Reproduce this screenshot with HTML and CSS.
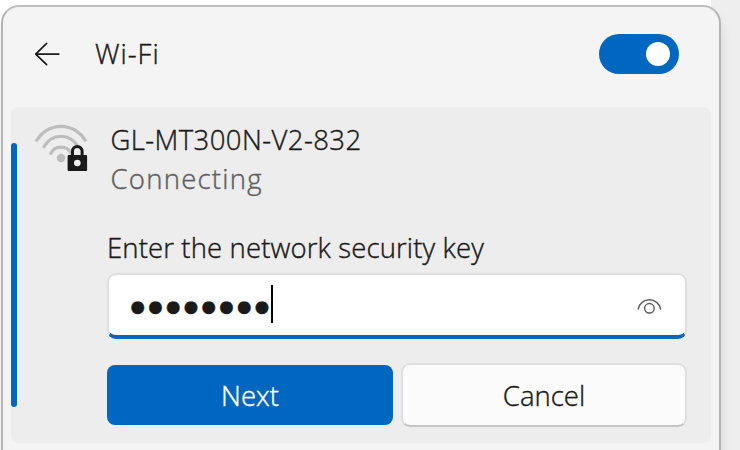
FILE: index.html
```html
<!DOCTYPE html>
<html lang="en">
<head>
<meta charset="utf-8">
<title>Wi-Fi</title>
<link rel="stylesheet" href="styles.css">
</head>
<body>
<main class="flyout">
  <header class="header">
    <svg class="back" width="26" height="24" viewBox="0 0 26 24" aria-hidden="true"><path d="M12.6 1.3 1.7 12.1l10.9 10.6M1.7 12.1H24.8"/></svg>
    <h1 class="title">Wi-Fi</h1>
    <span class="toggle"><span class="knob"></span></span>
  </header>
  <section class="card">
    <span class="accent"></span>
    <div class="network">
      <svg class="wifi" width="54" height="48" viewBox="0 0 54 48" aria-hidden="true">
        <g class="waves"><path d="M2.8 16.2a28 28 0 0 1 48.4 0M10 22.8a19 19 0 0 1 34 0M16.8 29.4a11.5 11.5 0 0 1 20.4 0"/></g>
        <circle class="dot" cx="27" cy="34" r="4.2"/>
        <path class="shackle" d="M38.5 32v-4.7a4.8 4.8 0 0 1 9.6 0V32"/>
        <rect class="lock" x="33.6" y="31" width="19.5" height="16" rx="1"/>
        <circle class="keyhole" cx="43.3" cy="39" r="3.3"/>
      </svg>
      <div class="details">
        <div class="name">GL-MT300N-V2-832</div>
        <div class="status">Connecting</div>
      </div>
    </div>
    <div class="form">
      <div class="label">Enter the network security key</div>
      <div class="field">
        <span class="mask">●●●●●●●●</span><span class="caret"></span>
        <svg class="eye" width="26" height="18" viewBox="0 0 26 18" aria-hidden="true"><path d="M2.2 12a11.4 11.4 0 0 1 22.4 0"/><circle cx="13.4" cy="11.3" r="4.8"/></svg>
      </div>
      <div class="actions">
        <button class="next"><span>Next</span></button>
        <button class="cancel"><span>Cancel</span></button>
      </div>
    </div>
  </section>
</main>
</body>
</html>
```
FILE: styles.css
```css
* { box-sizing: border-box; }
body {
  margin: 0;
  height: 450px;
  overflow: hidden;
  background: linear-gradient(90deg, #fff 711px, #eee 711px);
  font: 300 27.5px/36px "Open Sans", "Noto Sans", sans-serif;
  -webkit-text-stroke: .4px currentColor;
  color: #1a1a1a;
}
.flyout {
  width: 720px;
  height: 445px;
  margin: 5px 0 0 1px;
  border: 2px solid #b4b4b4;
  border-top-color: #c0c0c0;
  border-bottom: 0;
  border-radius: 18px 18px 0 0;
  background: #f4f4f4;
  box-shadow: 0 12px 14px rgba(0, 0, 0, .1);
  padding: 0 8px;
}
.header {
  display: flex;
  align-items: center;
  height: 100px;
  padding: 0 32px 6px 23px;
}
.back { fill: none; stroke: #1a1a1a; stroke-width: 1.7; stroke-linecap: round; stroke-linejoin: round; }
.title { margin: 0 0 0 35px; font: inherit; letter-spacing: 1px; }
.toggle {
  display: flex;
  align-items: center;
  justify-content: flex-end;
  width: 80px;
  height: 40px;
  margin-left: auto;
  padding-right: 9px;
  border-radius: 20px;
  background: #0067c0;
}
.knob { width: 24px; height: 24px; border-radius: 50%; background: #fff; }
.card {
  position: relative;
  width: 700px;
  height: 336px;
  border-radius: 8px;
  background: #ededed;
}
.accent { position: absolute; left: 0; top: 36px; width: 6px; height: 264px; border-radius: 3px; background: #0067c0; }
.network { display: flex; padding: 14px 0 0 23px; height: 122px; }
.wifi { margin-top: 3px; fill: none; }
.waves { stroke: #bdbdbd; stroke-width: 3.2; stroke-linecap: round; }
.dot { fill: #bdbdbd; }
.shackle { stroke: #1a1a1a; stroke-width: 3; }
.lock { fill: #1a1a1a; }
.keyhole { fill: #f2f2f2; }
.details { margin: 1px 0 0 22.5px; }
.name { height: 39px; white-space: nowrap; letter-spacing: .42px; }
.status { color: #606060; letter-spacing: 1.25px; }
.form { width: 580px; margin-left: 96px; }
.label { height: 44px; line-height: 38px; white-space: nowrap; letter-spacing: .13px; }
.field {
  display: flex;
  align-items: center;
  height: 66px;
  padding: 1px 23px 3px 21.5px;
  border: 2px solid #dfdfdf;
  border-bottom: 4px solid #0067c0;
  border-radius: 9px;
  background: #fff;
}
.mask { padding-top: 6px; font: 16.5px/38px "DejaVu Sans", sans-serif; letter-spacing: 3.35px; }
.caret { width: 2px; height: 38px; margin-left: -1.5px; background: #000; }
.eye { margin: 4px 0 0 auto; fill: none; stroke: #606060; stroke-width: 1.5; stroke-linecap: round; }
.actions { display: flex; gap: 8px; align-items: center; margin-top: 24px; }
button { display: flex; align-items: center; justify-content: center; padding: 2px 0 0; font: inherit; color: #1a1a1a; }
.next { width: 286px; height: 60px; border: 0; border-radius: 8px; background: #0067c0; color: #fff; }
.cancel { width: 286px; height: 64px; border: 2px solid #dfdfdf; border-bottom-color: #c6c6c6; border-radius: 9px; background: #fbfbfb; letter-spacing: 0; }
```
